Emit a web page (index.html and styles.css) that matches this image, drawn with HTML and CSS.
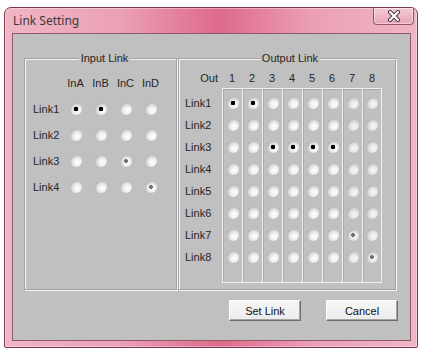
FILE: index.html
```html
<!DOCTYPE html>
<html lang="en">
<head>
    <meta charset="UTF-8">
    <title>Link Setting</title>
    <link rel="stylesheet" href="styles.css">
</head>
<body>
    <div class="window">
        <div class="titlebar">
            <span class="title">Link Setting</span>
            <button class="close-btn" aria-label="Close">
                <svg width="16" height="12" viewBox="0 0 16 12">
                    <path d="M4 2 L12 10 M12 2 L4 10" stroke="#4a3a40" stroke-width="4.2" stroke-linecap="round"/>
                    <path d="M4 2 L12 10 M12 2 L4 10" stroke="#fff" stroke-width="2.2" stroke-linecap="round"/>
                </svg>
            </button>
        </div>

        <div class="client">
            <div class="groups">
                <!-- input side -->
                <div class="group input-group">
                    <span class="group-title">Input Link</span>
                    <div class="input-grid">
                        <span></span>
                        <span class="hdr">InA</span>
                        <span class="hdr">InB</span>
                        <span class="hdr">InC</span>
                        <span class="hdr">InD</span>

                        <span class="lbl">Link1</span>
                        <i class="radio on"></i><i class="radio on"></i><i class="radio"></i><i class="radio"></i>
                        <span class="lbl">Link2</span>
                        <i class="radio"></i><i class="radio"></i><i class="radio"></i><i class="radio"></i>
                        <span class="lbl">Link3</span>
                        <i class="radio"></i><i class="radio"></i><i class="radio dim"></i><i class="radio"></i>
                        <span class="lbl">Link4</span>
                        <i class="radio"></i><i class="radio"></i><i class="radio"></i><i class="radio dim"></i>
                    </div>
                </div>

                <!-- output side -->
                <div class="group output-group">
                    <span class="group-title">Output Link</span>
                    <div class="out-body">
                        <div class="row-labels">
                            <span class="out-hdr">Out</span>
                            <span class="lbl">Link1</span>
                            <span class="lbl">Link2</span>
                            <span class="lbl">Link3</span>
                            <span class="lbl">Link4</span>
                            <span class="lbl">Link5</span>
                            <span class="lbl">Link6</span>
                            <span class="lbl">Link7</span>
                            <span class="lbl">Link8</span>
                        </div>
                        <div class="out-col">
                            <span class="hdr">1</span>
                            <div class="col-box">
                                <i class="radio on"></i><i class="radio"></i><i class="radio"></i><i class="radio"></i>
                                <i class="radio"></i><i class="radio"></i><i class="radio"></i><i class="radio"></i>
                            </div>
                        </div>
                        <div class="out-col">
                            <span class="hdr">2</span>
                            <div class="col-box">
                                <i class="radio on"></i><i class="radio"></i><i class="radio"></i><i class="radio"></i>
                                <i class="radio"></i><i class="radio"></i><i class="radio"></i><i class="radio"></i>
                            </div>
                        </div>
                        <div class="out-col">
                            <span class="hdr">3</span>
                            <div class="col-box">
                                <i class="radio"></i><i class="radio"></i><i class="radio on"></i><i class="radio"></i>
                                <i class="radio"></i><i class="radio"></i><i class="radio"></i><i class="radio"></i>
                            </div>
                        </div>
                        <div class="out-col">
                            <span class="hdr">4</span>
                            <div class="col-box">
                                <i class="radio"></i><i class="radio"></i><i class="radio on"></i><i class="radio"></i>
                                <i class="radio"></i><i class="radio"></i><i class="radio"></i><i class="radio"></i>
                            </div>
                        </div>
                        <div class="out-col">
                            <span class="hdr">5</span>
                            <div class="col-box">
                                <i class="radio"></i><i class="radio"></i><i class="radio on"></i><i class="radio"></i>
                                <i class="radio"></i><i class="radio"></i><i class="radio"></i><i class="radio"></i>
                            </div>
                        </div>
                        <div class="out-col">
                            <span class="hdr">6</span>
                            <div class="col-box">
                                <i class="radio"></i><i class="radio"></i><i class="radio on"></i><i class="radio"></i>
                                <i class="radio"></i><i class="radio"></i><i class="radio"></i><i class="radio"></i>
                            </div>
                        </div>
                        <div class="out-col grey">
                            <span class="hdr">7</span>
                            <div class="col-box">
                                <i class="radio"></i><i class="radio"></i><i class="radio"></i><i class="radio"></i>
                                <i class="radio"></i><i class="radio"></i><i class="radio dim"></i><i class="radio"></i>
                            </div>
                        </div>
                        <div class="out-col grey last">
                            <span class="hdr">8</span>
                            <div class="col-box">
                                <i class="radio"></i><i class="radio"></i><i class="radio"></i><i class="radio"></i>
                                <i class="radio"></i><i class="radio"></i><i class="radio"></i><i class="radio dim"></i>
                            </div>
                        </div>
                    </div>
                </div>
            </div>

            <div class="actions">
                <button class="btn">Set Link</button>
                <button class="btn">Cancel</button>
            </div>
        </div>
    </div>
</body>
</html>
```

FILE: styles.css
```css
body {
    margin: 0;
    background: #fff;
    font-family: "Liberation Sans", Arial, sans-serif;
    font-size: 11px;
    color: #262626;
}
.window {
    box-sizing: border-box;
    width: 414px;
    height: 341px;
    margin: 7px 0 0 4px;
    border: 1px solid #7c3a4e;
    border-radius: 7px 7px 2px 2px;
    background: linear-gradient(90deg, #efb6c5 0%, #eba0b5 28%, #de6a8b 52%, #eba0b5 75%, #efb6c5 100%);
    box-shadow: inset 0 0 0 1px rgba(255,255,255,0.35);
    padding: 0 6px 6px 7px;
    display: flex;
    flex-direction: column;
}
.titlebar {
    height: 25px;
    display: flex;
    justify-content: space-between;
    align-items: flex-start;
}
.title {
    font-family: "Noto Sans", "Liberation Sans", sans-serif;
    font-size: 12px;
    line-height: 16px;
    color: #3a3a3a;
    margin: 5px 0 0 1px;
}
.close-btn {
    width: 41px;
    height: 17px;
    margin-right: -3px;
    padding: 0;
    border: 1px solid #9a5468;
    border-top: none;
    border-radius: 0 0 4px 4px;
    background: linear-gradient(#f5cad6, #e9a3b7);
    box-shadow: inset 0 0 0 1px rgba(255,255,255,0.45);
    display: flex;
    align-items: center;
    justify-content: center;
}
.client {
    flex: 1;
    background: #c0c0c0;
    border: 1px solid #8e5868;
    padding: 24px 12px 0 11px;
}
.groups {
    display: flex;
    gap: 1px;
    height: 232px;
}
.group {
    box-sizing: border-box;
    border: 1px solid #a2a2a2;
    box-shadow: 1px 1px 0 #f4f4f4, inset 1px 1px 0 #f4f4f4;
}
.input-group {
    width: 153px;
    padding-left: 8px;
}
.output-group {
    width: 218px;
    padding-left: 6px;
}
.group-title {
    display: table;
    margin: -7px auto 0;
    padding: 0 2px;
    line-height: 13px;
    background: #c0c0c0;
}
.input-grid {
    margin-top: 5px;
    display: grid;
    grid-template-columns: 30px repeat(4, 25px);
    grid-auto-rows: 26px;
    align-items: center;
    justify-items: center;
}
.input-grid .lbl {
    justify-self: start;
}
.out-body {
    margin-top: 4px;
    display: flex;
}
.row-labels {
    width: 37px;
    display: flex;
    flex-direction: column;
}
.out-hdr {
    height: 19px;
    line-height: 19px;
    text-align: right;
    padding-right: 4px;
    margin-bottom: 4px;
}
.row-labels .lbl {
    height: 22px;
    line-height: 22px;
}
.out-col {
    width: 20px;
    display: flex;
    flex-direction: column;
}
.out-col .hdr {
    height: 19px;
    line-height: 19px;
    text-align: center;
}
.col-box {
    box-sizing: border-box;
    height: 195px;
    padding-top: 3px;
    border: 1px solid #f0f0f0;
    border-right: none;
    box-shadow: inset 1px 1px 0 #aaaaaa;
    display: grid;
    grid-auto-rows: 22px;
    align-items: center;
    justify-items: center;
    align-content: start;
}
.out-col.last .col-box {
    border-right: 1px solid #f0f0f0;
}
.radio {
    --ball: radial-gradient(circle at 62% 62%, #ffffff 0%, #f4f4f4 28%, #dedede 52%, #b4b4b4 74%, #7e7e7e 100%);
    display: block;
    width: 12px;
    height: 12px;
    border-radius: 50%;
    background: var(--ball);
}
.out-col.grey .radio {
    --ball: radial-gradient(circle at 62% 62%, #f6f6f6 0%, #ececec 28%, #d6d6d6 52%, #b0b0b0 74%, #808080 100%);
}
.radio.on {
    background: radial-gradient(circle at 50% 50%, #000 0 2px, transparent 2.6px), var(--ball);
}
.radio.dim {
    background: radial-gradient(circle at 50% 50%, #707070 0 1.6px, transparent 2.2px), var(--ball);
}
.actions {
    margin-top: 10px;
    display: flex;
    justify-content: flex-end;
    gap: 25px;
}
.btn {
    box-sizing: border-box;
    width: 72px;
    height: 21px;
    padding: 0;
    font-family: "Liberation Sans", Arial, sans-serif;
    font-size: 11px;
    color: #111;
    background: linear-gradient(#f6f6f6, #ececec);
    border: 1px solid;
    border-color: #fff #6e6e6e #6e6e6e #fff;
    box-shadow: inset -1px -1px 0 #a4a4a4;
}
```
